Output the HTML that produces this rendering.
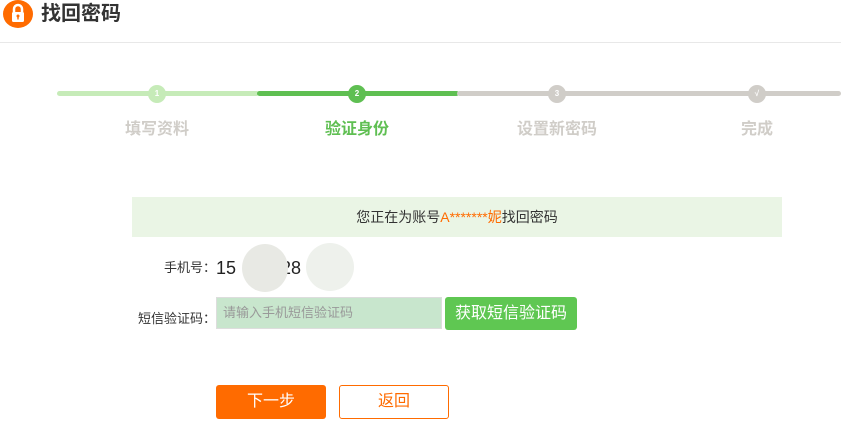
<!DOCTYPE html>
<html><head><meta charset="utf-8"><style>
*{margin:0;padding:0;box-sizing:border-box}
body{width:841px;height:443px;overflow:hidden;background:#fff;font-family:"Liberation Sans","Noto Sans CJK SC",sans-serif;position:relative}
.a{position:absolute}
.bar{position:absolute;top:91px;height:5px;border-radius:3px}
.c{position:absolute;top:85px;width:18px;height:18px;border-radius:50%;color:#fff;font-size:8px;font-weight:bold;text-align:center;line-height:18px}
.lbl{position:absolute;top:115px;width:200px;text-align:center;font-size:16px;font-weight:bold;color:#d0cdc8}
</style></head><body>
<div class="a" style="left:3px;top:0;width:30px;height:28px;border-radius:50%;background:#ff6b00"></div>
<svg class="a" style="left:3px;top:0" width="30" height="28"><path d="M11 12V9a4 4 0 0 1 8 0v3" stroke="#fff" stroke-width="2.5" fill="none"/><rect x="9" y="12" width="12" height="10" rx="1.5" fill="#fff"/><circle cx="15" cy="16" r="1.5" fill="#ff6b00"/><rect x="14.3" y="16" width="1.4" height="3.5" fill="#ff6b00"/></svg>
<div class="a" style="left:41px;top:0;font-size:20px;font-weight:bold;color:#333;line-height:28px">找回密码</div>
<div class="a" style="left:0;top:42px;width:841px;height:1px;background:#e8e8e8"></div>

<div class="bar" style="left:57px;width:202px;background:#c6ebb8"></div>
<div class="bar" style="left:257px;width:202px;background:#5fbf52"></div>
<div class="bar" style="left:457px;width:384px;background:#d0cdc8"></div>
<div class="c" style="left:148px;background:#c6ebb8">1</div>
<div class="c" style="left:348px;background:#5fbf52">2</div>
<div class="c" style="left:548px;background:#d0cdc8">3</div>
<div class="c" style="left:748px;background:#d0cdc8">√</div>
<div class="lbl" style="left:57px">填写资料</div>
<div class="lbl" style="left:257px;color:#5fbf52">验证身份</div>
<div class="lbl" style="left:457px">设置新密码</div>
<div class="lbl" style="left:657px">完成</div>

<div class="a" style="left:132px;top:197px;width:650px;height:40px;background:#eaf5e5;text-align:center;line-height:40px;font-size:14px;color:#333">您正在为账号<span style="color:#ff6b00">A*******妮</span>找回密码</div>

<div class="a" style="left:110px;top:258px;width:106px;text-align:right;font-size:13px;color:#333;line-height:20px">手机号：</div>
<div class="a" style="left:216px;top:256px;font-size:18px;color:#222;line-height:24px">15&nbsp;&nbsp;&nbsp;&nbsp;&nbsp;&nbsp;&nbsp;328</div>
<div class="a" style="left:242px;top:244px;width:46px;height:48px;border-radius:50%;background:#e8e9e4"></div>
<div class="a" style="left:306px;top:243px;width:48px;height:48px;border-radius:50%;background:#eef1ec"></div>

<div class="a" style="left:110px;top:309px;width:106px;text-align:right;font-size:13px;color:#333;line-height:20px">短信验证码：</div>
<div class="a" style="left:216px;top:297px;width:226px;height:32px;background:#c8e6cd;border:1px solid #ddd;font-size:13px;color:#999;line-height:30px;padding-left:6px">请输入手机短信验证码</div>
<div class="a" style="left:445px;top:297px;width:132px;height:33px;background:#5fc752;border-radius:3px;color:#fff;font-size:16px;text-align:center;line-height:33px">获取短信验证码</div>

<div class="a" style="left:216px;top:385px;width:110px;height:34px;background:#ff6b00;border-radius:3px;color:#fff;font-size:16px;text-align:center;line-height:34px">下一步</div>
<div class="a" style="left:339px;top:385px;width:110px;height:34px;border:1px solid #ff6b00;border-radius:3px;color:#ff6b00;font-size:16px;text-align:center;line-height:32px">返回</div>
</body></html>
